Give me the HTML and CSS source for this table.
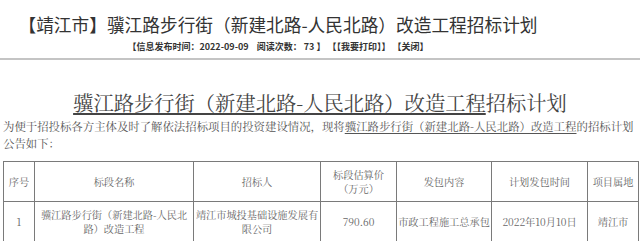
FILE: index.html
```html
<!DOCTYPE html>
<html lang="zh-CN">
<head>
<meta charset="utf-8">
<title>招标计划</title>
<link rel="stylesheet" href="styles.css">
</head>
<body>
<header class="head">
  <h1 class="title">【靖江市】骥江路步行街（新建北路-人民北路）改造工程招标计划</h1>
  <div class="meta">【信息发布时间：2022-09-09&nbsp;&nbsp;&nbsp;&nbsp;阅读次数：&nbsp;73&nbsp;】&nbsp;【【我要打印】】&nbsp;【关闭】</div>
</header>
<div class="rule"></div>
<main class="article">
  <h2 class="subtitle"><span class="ul">骥江路步行街（新建北路-人民北路）改造工程</span>招标计划</h2>
  <p class="intro">为便于招投标各方主体及时了解依法招标项目的投资建设情况，现将<span class="ul">骥江路步行街（新建北路-人民北路）改造工程</span>的招标计划公告如下：</p>
  <table class="plan">
    <colgroup>
      <col class="c1"><col class="c2"><col class="c3"><col class="c4"><col class="c5"><col class="c6"><col class="c7">
    </colgroup>
    <thead>
      <tr>
        <th>序号</th>
        <th>标段名称</th>
        <th>招标人</th>
        <th>标段估算价<br>（万元）</th>
        <th>发包内容</th>
        <th>计划发包时间</th>
        <th>项目属地</th>
      </tr>
    </thead>
    <tbody>
      <tr>
        <td>1</td>
        <td>骥江路步行街（新建北路-人民北路）改造工程</td>
        <td>靖江市城投基础设施发展有限公司</td>
        <td>790.60</td>
        <td>市政工程施工总承包</td>
        <td>2022年10月10日</td>
        <td>靖江市</td>
      </tr>
    </tbody>
  </table>
</main>
</body>
</html>
```

FILE: styles.css
```css
html, body {
  margin: 0;
  padding: 0;
  background: #fff;
}
body {
  font-family: "Noto Sans CJK SC", "Noto Sans", sans-serif;
  color: #333;
}
.head {
  width: 556px;
  text-align: center;
}
.title {
  margin: 0;
  padding-top: 10px;
  font-size: 17.7px;
  line-height: 28px;
  font-weight: normal;
  color: #333;
  white-space: nowrap;
}
.meta {
  margin-top: 2px;
  font-size: 9px;
  line-height: 14px;
  font-weight: bold;
  color: #333;
  white-space: nowrap;
}
.rule {
  margin-top: 4px;
  height: 2px;
  background: #c4c4c4;
}
.article {
  padding-left: 3px;
  font-family: "Noto Serif CJK SC", "Noto Sans CJK SC", serif;
}
.subtitle {
  margin: 28px 0 0;
  text-align: center;
  padding-right: 3px;
  font-size: 20.3px;
  line-height: 30px;
  font-weight: normal;
  color: #444;
  white-space: nowrap;
}
.ul {
  text-decoration: underline;
  text-underline-offset: 2px;
}
.intro {
  margin: 0;
  width: 637px;
  font-size: 11.4px;
  line-height: 16.5px;
  color: #555;
}
.plan {
  margin-top: 10px;
  border-collapse: collapse;
  table-layout: fixed;
  width: 635px;
  color: #666;
  font-size: 10.2px;
}
.plan th, .plan td {
  border: 1px solid #7a7a7a;
  text-align: center;
  vertical-align: middle;
  font-weight: normal;
  padding: 0;
  line-height: 14px;
}
.plan th {
  height: 39px;
}
.plan td {
  height: 40px;
}
.c1 { width: 31px; }
.c2 { width: 159px; }
.c3 { width: 127px; }
.c4 { width: 76px; }
.c5 { width: 95px; }
.c6 { width: 96px; }
.c7 { width: 51px; }
```
